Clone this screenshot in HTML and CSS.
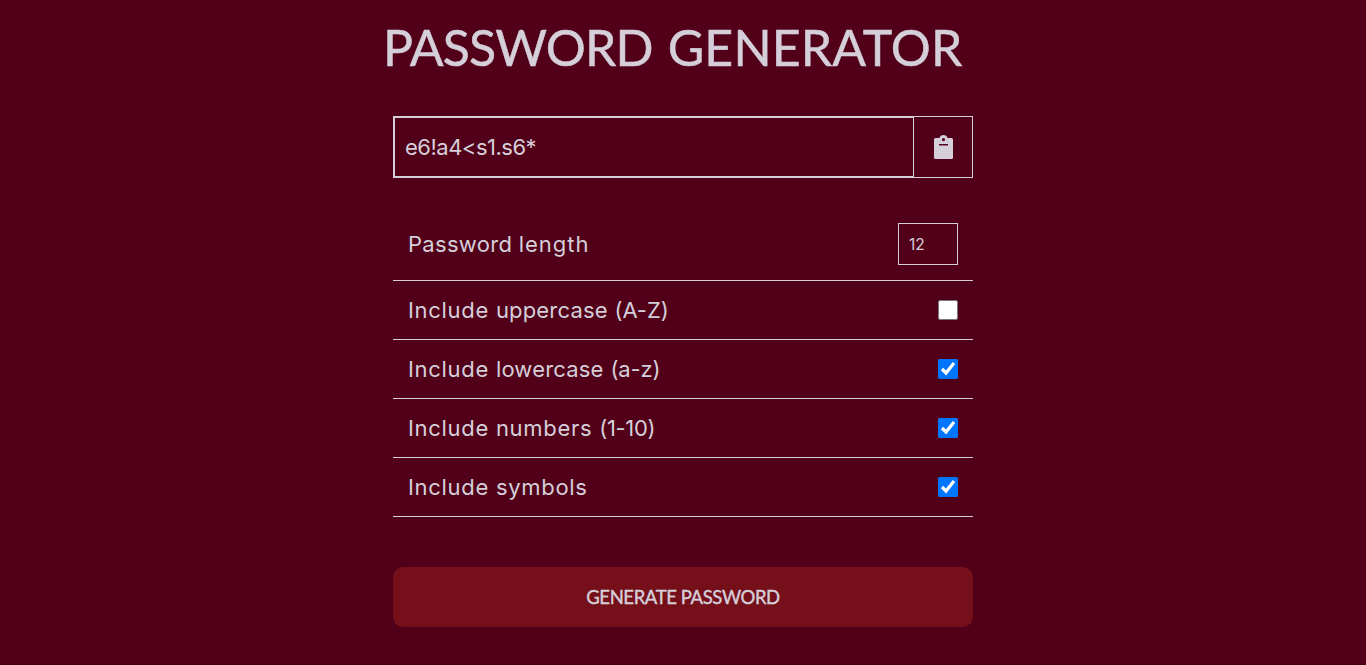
FILE: index.html
```html
<!DOCTYPE html>
<html lang="en">
<head>
<meta charset="utf-8">
<title>Password Generator</title>
<link rel="stylesheet" href="styles.css">
</head>
<body>
<main class="container">
  <h1 class="title"><span class="tight">PASSWORD</span> GENERATOR</h1>
  <div class="result">
    <input class="password" type="text" value="e6!a4&lt;s1.s6*" readonly aria-label="Password">
    <button class="copy" aria-label="Copy">
      <svg width="19" height="24" viewBox="0 0 19 24"><path fill-rule="evenodd" d="M1.5 3H5.5C6 1.2 7.3 0 9.5 0S13 1.2 13.5 3H17.5Q19 3 19 4.5V22.5Q19 24 17.5 24H1.5Q0 24 0 22.5V4.5Q0 3 1.5 3ZM9.5 3A1.6 1.6 0 1 0 9.5 6.2A1.6 1.6 0 1 0 9.5 3ZM5 9V10.5H14V9Z"/></svg>
    </button>
  </div>
  <div class="row row-length">
    <label class="label length" for="len">Password <span class="wide">length</span></label>
    <input class="number" id="len" type="text" value="12">
  </div>
  <div class="row">
    <label class="label" for="upper">Include <span class="case">uppercase</span> <span class="range">(A-Z)</span></label>
    <input class="check" id="upper" type="checkbox">
  </div>
  <div class="row">
    <label class="label" for="lower">Include <span class="case">lowercase</span> <span class="range">(a-z)</span></label>
    <input class="check" id="lower" type="checkbox" checked>
  </div>
  <div class="row">
    <label class="label" for="nums">Include numbers <span class="digits">(1-10)</span></label>
    <input class="check" id="nums" type="checkbox" checked>
  </div>
  <div class="row">
    <label class="label" for="syms">Include symbols</label>
    <input class="check" id="syms" type="checkbox" checked>
  </div>
  <button class="generate">GENERATE PASSWORD</button>
</main>
</body>
</html>
```
FILE: styles.css
```css
* { box-sizing: border-box; }

body {
  margin: 0;
  height: 100vh;
  border-bottom: 1px solid #400012;
  background: #520019;
  color: #d5cfda;
  font-family: Inter, sans-serif;
  overflow: hidden;
}

.container { width: 580px; margin: 0 auto; }

.title {
  margin: 0 0 39px -10px;
  padding-top: 17px;
  font: 400 50px/60px Lato, sans-serif;
  letter-spacing: 0.15px;
  word-spacing: 2px;
  white-space: nowrap;
  -webkit-text-stroke: 0.5px #d5cfda;
}

.tight { letter-spacing: -0.8px; }

.result {
  display: flex;
  height: 62px;
  border: 1px solid #d5cfda;
}

.password {
  width: 520px;
  padding: 0 10px;
  border: 1px solid #d5cfda;
  background: transparent;
  color: inherit;
  font: 22px Inter, sans-serif;
  letter-spacing: -0.5px;
}

.copy {
  display: grid;
  flex: 1;
  place-items: center;
  padding: 0;
  border: 0;
  background: transparent;
  fill: #d5cfda;
}

.row {
  display: flex;
  align-items: center;
  justify-content: space-between;
  height: 59px;
  padding: 0 15px;
  border-bottom: 1px solid #d5cfda;
}

.row-length { height: 73px; margin-top: 30px; }

.label {
  padding-bottom: 1px;
  font-size: 22px;
  line-height: 28px;
  letter-spacing: 0.7px;
  white-space: nowrap;
}

.length { letter-spacing: 0.3px; }
.wide { letter-spacing: 1px; }
.case { letter-spacing: 0.17px; }
.range { letter-spacing: -0.1px; }
.digits { letter-spacing: -0.3px; }

.number {
  width: 60px;
  height: 42px;
  padding: 0 10px;
  border: 1px solid #d5cfda;
  background: transparent;
  color: inherit;
  font: 15.5px Inter, sans-serif;
}

.check { width: 20px; height: 20px; margin: 0; }

.generate {
  display: block;
  width: 100%;
  height: 60px;
  margin-top: 50px;
  padding: 0;
  border: 0;
  border-radius: 10px;
  background: #750f1a;
  color: #d5cfda;
  font: 400 18.5px Lato, sans-serif;
  letter-spacing: -0.4px;
  -webkit-text-stroke: 0.4px #d5cfda;
}
```
